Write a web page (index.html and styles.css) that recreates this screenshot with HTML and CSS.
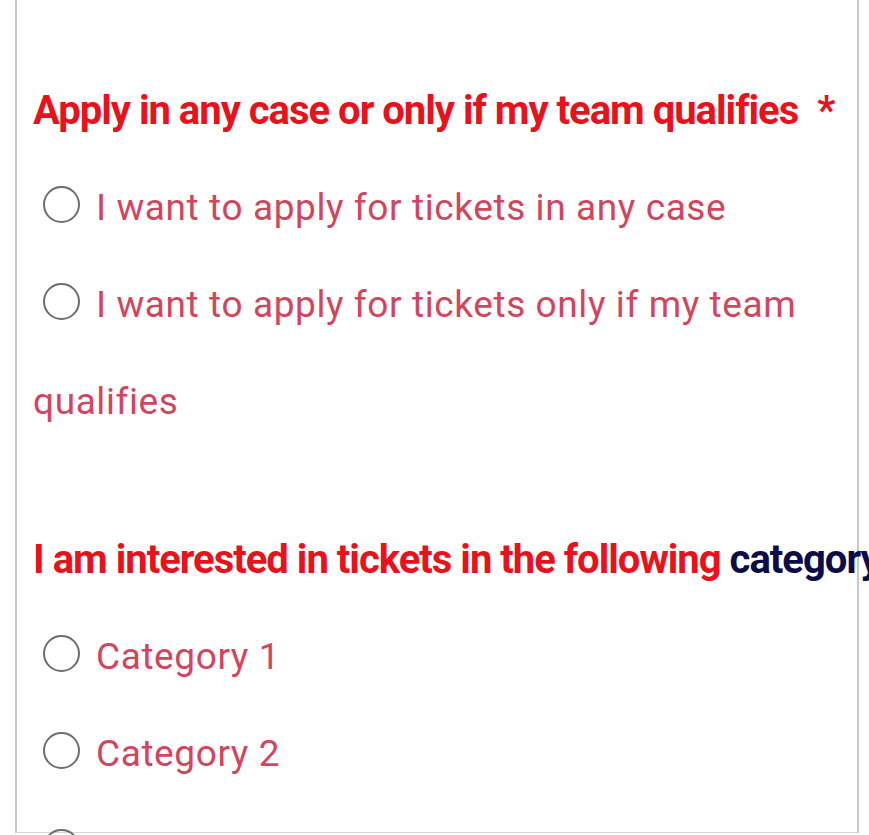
FILE: index.html
```html
<!DOCTYPE html>
<html>
<head>
<meta charset="utf-8">
<link rel="stylesheet" href="styles.css">
</head>
<body>
<div class="frame">
  <div class="content">
    <div class="question">Apply in any case or only if my team qualifies <span class="req">*</span></div>
    <div class="option"><span class="radio"></span>I want to apply for tickets in any case</div>
    <div class="option"><span class="radio"></span>I want to apply for tickets only if my team qualifies</div>
    <div class="question q2">I am interested in tickets in the following <span class="dark">category</span></div>
    <div class="option"><span class="radio"></span>Category 1</div>
    <div class="option"><span class="radio"></span>Category 2</div>
    <div class="option"><span class="radio"></span>Category 3</div>
  </div>
</div>
</body>
</html>
```
FILE: styles.css
```css
html, body {
  margin: 0;
  padding: 0;
  background: #ffffff;
  overflow: hidden;
}
body {
  width: 869px;
  height: 835px;
  font-family: Roboto, "Liberation Sans", sans-serif;
}
.frame {
  margin-left: 15px;
  width: 840px;
  height: 832px;
  border-left: 2px solid #c9c9c9;
  border-right: 2px solid #c9c9c9;
  border-bottom: 1px solid #d6d6d6;
}
.content {
  padding: 63px 0 0 16px;
}
.question {
  font-size: 40px;
  font-weight: 700;
  color: #e8121c;
  line-height: 96px;
  letter-spacing: -1px;
  white-space: nowrap;
}
.req {
  margin-left: 10px;
}
.q2 {
  margin-top: 62px;
}
.dark {
  color: #0c0c48;
}
.option {
  font-size: 37px;
  letter-spacing: 0.6px;
  color: #d2465d;
  line-height: 97px;
  width: 800px;
}
.radio {
  display: inline-block;
  width: 33px;
  height: 33px;
  border: 2px solid #6e6e6e;
  border-radius: 50%;
  margin-left: 10px;
  margin-right: 16px;
  vertical-align: -3px;
}
```
